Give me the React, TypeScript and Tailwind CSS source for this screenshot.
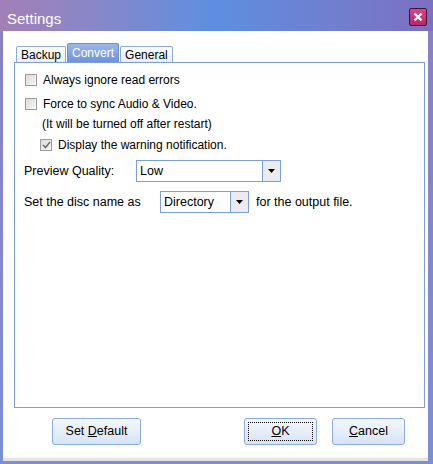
import React from 'react'

const font = { fontFamily: '"Liberation Sans", Arial, sans-serif' }

function Check({ checked = false }: { checked?: boolean }) {
  return (
    <span className="w-[12px] h-[12px] shrink-0 border border-[#9c9c9c] bg-gradient-to-br from-[#dcdcdc] to-[#f6f6f6] flex items-center justify-center">
      {checked && (
        <svg width="9" height="8" viewBox="0 0 9 8">
          <path d="M1 4 L3.5 6.5 L8 1" fill="none" stroke="#6f6f6f" strokeWidth="1.6" />
        </svg>
      )}
    </span>
  )
}

function Select({ value, width }: { value: string; width: string }) {
  return (
    <div className={`${width} h-[22px] border border-[#7aa0dc] bg-white flex items-stretch`}>
      <span className="flex-1 pl-[3px] flex items-center text-[12.5px] text-black">{value}</span>
      <span className="w-[18px] border-l border-[#7aa0dc] bg-[#ececec] flex items-center justify-center">
        <svg width="7" height="4" viewBox="0 0 7 4">
          <path d="M0 0 H7 L3.5 4 Z" fill="#000" />
        </svg>
      </span>
    </div>
  )
}

function Btn({ children, width, focused = false }: { children: React.ReactNode; width: string; focused?: boolean }) {
  return (
    <button className={`${width} h-[27px] rounded-[3px] border border-[#8aaee0] bg-gradient-to-b from-[#f4f8fd] via-[#e6eefa] to-[#d6e3f6] p-[3px] text-[12.5px] text-black`}>
      <span className={`w-full h-full flex items-center justify-center ${focused ? 'border border-dotted border-black' : ''}`}>
        {children}
      </span>
    </button>
  )
}

export default function App() {
  return (
    <div style={font} className="w-[433px] h-[464px] bg-gradient-to-b from-[#8a7fc2] to-[#7d8ed4] flex flex-col overflow-hidden">
      {/* title bar */}
      <div className="h-[31px] shrink-0 bg-gradient-to-r from-[#a27fb6] via-[#5b8fe0] to-[#7c70c0] flex items-center justify-between pl-[7px] pr-[6px]">
        <span className="text-white text-[15px] leading-none pt-[5px]">Settings</span>
        <span className="w-[18px] h-[18px] mt-[3px] rounded-[2px] border border-[#3d1530] bg-gradient-to-b from-[#d8478a] to-[#b8236a] flex items-center justify-center">
          <svg width="10" height="10" viewBox="0 0 10 10">
            <path d="M1.5 1.5 L8.5 8.5 M8.5 1.5 L1.5 8.5" stroke="#fff" strokeWidth="2.4" />
          </svg>
        </span>
      </div>

      {/* client area */}
      <div className="ml-[3px] mr-[5px] h-[430px] bg-white border-b-[3px] border-[#e4e4e4] flex flex-col pl-[11px] pr-[3px] pt-[12px]">
        {/* tabs */}
        <div className="flex items-end gap-[1px] pl-[2px] h-[19px] text-[12px]">
          <span className="h-[16px] px-[4px] border border-b-0 border-[#8ea8d8] rounded-t-[2px] bg-gradient-to-b from-white to-[#e8eef8] text-black flex items-center">Backup</span>
          <span className="h-[19px] px-[4px] border border-b-0 border-[#6f8fd0] rounded-t-[2px] bg-gradient-to-b from-[#9bb6ec] to-[#6f92da] text-white flex items-center">Convert</span>
          <span className="h-[16px] px-[4px] border border-b-0 border-[#8ea8d8] rounded-t-[2px] bg-gradient-to-b from-white to-[#e8eef8] text-black flex items-center">General</span>
        </div>

        {/* panel */}
        <div className="h-[346px] border border-[#7b9edb] pl-[10px] pt-[10px] text-[12px] text-black flex flex-col">
          <label className="flex items-center gap-[6px] h-[14px]">
            <Check />
            <span>Always ignore read errors</span>
          </label>
          <label className="flex items-center gap-[6px] h-[14px] mt-[10px]">
            <Check />
            <span>Force to sync Audio &amp; Video.</span>
          </label>
          <span className="pl-[17px] mt-[6px] h-[14px] leading-[14px]">(It will be turned off after restart)</span>
          <label className="flex items-center gap-[6px] h-[14px] mt-[7px] pl-[15px]">
            <Check checked />
            <span>Display the warning notification.</span>
          </label>

          <div className="flex items-center mt-[8px] -ml-[1px]">
            <span className="w-[112px] text-[12.5px]">Preview Quality:</span>
            <Select value="Low" width="w-[145px]" />
          </div>

          <div className="flex items-center mt-[9px] -ml-[1px]">
            <span className="w-[136px] text-[12.5px]">Set the disc name as</span>
            <Select value="Directory" width="w-[89px]" />
            <span className="ml-[7px] text-[12.5px]">for the output file.</span>
          </div>
        </div>

        {/* buttons */}
        <div className="flex items-center mt-[10px] pl-[38px]">
          <Btn width="w-[89px]">
            <span>
              Set <span className="underline">D</span>efault
            </span>
          </Btn>
          <div className="ml-[103px]">
            <Btn width="w-[73px]" focused>
              <span>
                <span className="underline">O</span>K
              </span>
            </Btn>
          </div>
          <div className="ml-[15px]">
            <Btn width="w-[73px]">
              <span>
                <span className="underline">C</span>ancel
              </span>
            </Btn>
          </div>
        </div>
      </div>
    </div>
  )
}
